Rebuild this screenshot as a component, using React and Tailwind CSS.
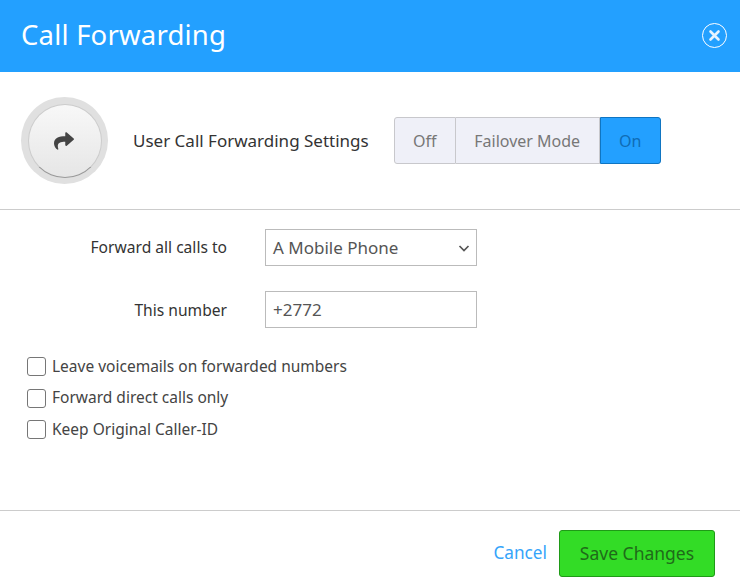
import { FaShare } from 'react-icons/fa';

const font = { fontFamily: '"Noto Sans", sans-serif' };

const Check = ({ label }) => (
  <label className="flex items-center h-[21px] gap-[6px]">
    <span className="w-[19px] h-[19px] rounded-[3px] border border-[#767676] bg-white shrink-0" />
    <span className="text-[15.5px] text-[#444]">{label}</span>
  </label>
);

export default function App() {
  return (
    <div className="w-[740px] h-[588px] bg-white flex flex-col overflow-hidden font-['Noto_Sans',sans-serif]">
      {/* Header */}
      <header className="h-[72px] bg-[#23a0ff] flex items-center justify-between pl-[21px] pr-[13px] pb-[2px] shrink-0">
        <h1 className="text-[27.5px] text-white tracking-[0.2px]">Call Forwarding</h1>
        <button className="w-[25px] h-[25px] rounded-full border border-white flex items-center justify-center">
          <svg width="13" height="13" viewBox="0 0 13 13" stroke="#e6f4ff" strokeWidth="2.6" strokeLinecap="round">
            <path d="M2.5 2.5L10.5 10.5M10.5 2.5L2.5 10.5" />
          </svg>
        </button>
      </header>

      {/* Mode row */}
      <div className="h-[138px] border-b border-[#ccc] flex items-center pl-[21px] shrink-0">
        <div className="w-[87px] h-[87px] rounded-full bg-[#e0e0e0] flex items-center justify-center shrink-0">
          <div className="w-[74px] h-[74px] rounded-full bg-gradient-to-b from-[#f8f8f8] to-[#e6e6e6] border border-[#ccc] border-b-[#999] flex items-center justify-center">
            <FaShare className="text-[#444] w-[20px] h-[20px] -translate-x-px" />
          </div>
        </div>
        <span className="ml-[25px] text-[17px] text-[#333]">User Call Forwarding Settings</span>
        <div className="ml-[25px] flex h-[47px] rounded-[3px] text-[16px] text-[#777]">
          <div className="w-[62px] bg-[#eff0f8] border border-[#c8c8cc] rounded-l-[3px] flex items-center justify-center">Off</div>
          <div className="w-[144px] bg-[#eff0f8] border-y border-r border-[#c8c8cc] flex items-center justify-center">Failover Mode</div>
          <div className="w-[61px] bg-[#23a0ff] border border-[#0f75c2] rounded-r-[3px] text-[#0f6cb5] flex items-center justify-center">On</div>
        </div>
      </div>

      {/* Form */}
      <div className="flex-1 border-b border-[#ccc] pt-[19px]">
        <div className="flex items-center h-[37px]">
          <span className="w-[227px] text-right text-[15.6px] text-[#333]">Forward all calls to</span>
          <div className="ml-[38px] w-[212px] h-[37px] border border-[#bbb] flex items-center justify-between pl-[7px] pr-[5px]">
            <span className="text-[17px] text-[#555]">A Mobile Phone</span>
            <svg width="14" height="14" viewBox="0 0 14 14" fill="none" stroke="#555" strokeWidth="1.7">
              <path d="M2.5 5L7 9.5L11.5 5" />
            </svg>
          </div>
        </div>
        <div className="flex items-center h-[37px] mt-[25px]">
          <span className="w-[227px] text-right text-[15.6px] text-[#333] translate-y-px">This number</span>
          <input
            readOnly
            value="+2772"
            style={font}
            className="ml-[38px] w-[212px] h-[37px] border border-[#bbb] pl-[7px] text-[17px] text-[#555] outline-none"
          />
        </div>
        <div className="mt-[28px] pl-[27px] flex flex-col gap-[10.5px]">
          <Check label="Leave voicemails on forwarded numbers" />
          <Check label="Forward direct calls only" />
          <Check label="Keep Original Caller-ID" />
        </div>
      </div>

      {/* Footer */}
      <footer className="h-[77px] flex items-center justify-end gap-[12px] pr-[25px] pt-[8px] shrink-0">
        <a className="text-[17.2px] text-[#35a4fa] -translate-y-px">Cancel</a>
        <button className="w-[156px] h-[47px] bg-[#33dc26] border border-[#1f9a17] rounded-[3px] text-[17.5px] text-[#1f6b19]">
          Save Changes
        </button>
      </footer>
    </div>
  );
}
